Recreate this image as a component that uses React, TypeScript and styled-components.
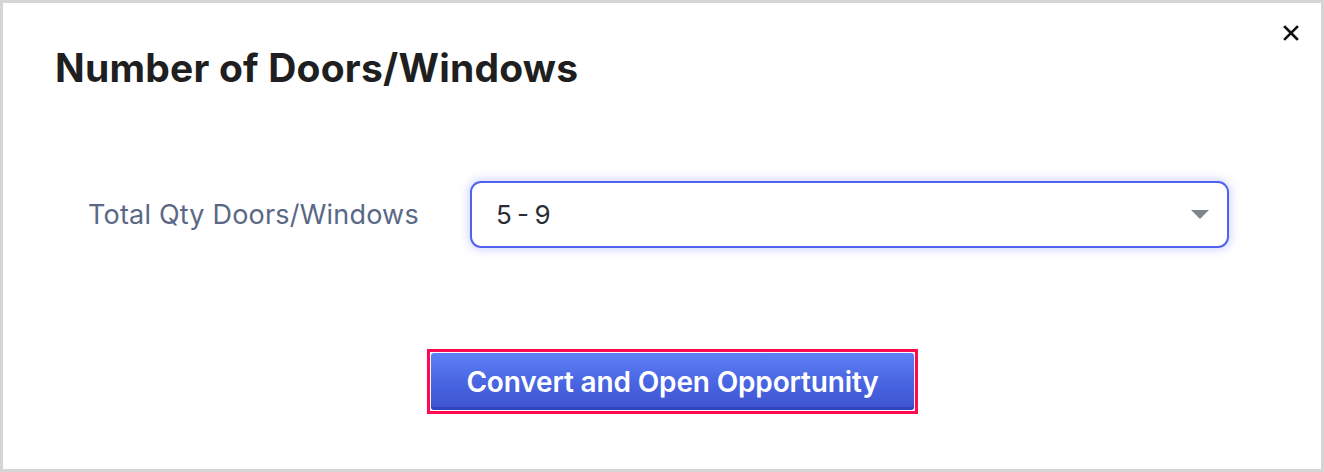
import styled, { createGlobalStyle } from 'styled-components';

const GlobalStyle = createGlobalStyle`
  html, body {
    margin: 0;
    padding: 0;
    background: #ffffff;
  }
  * {
    box-sizing: border-box;
  }
`;

export default function App() {
  return (
    <>
      <GlobalStyle />
      <Frame>
        <CloseButton aria-label="Close">
          <svg width="16" height="16" viewBox="0 0 16 16">
            <path d="M2 2 L14 14 M14 2 L2 14" stroke="#111" strokeWidth="2.6" strokeLinecap="square" />
          </svg>
        </CloseButton>
        <Title>Number of Doors/Windows</Title>
        <FieldRow>
          <Label>Total Qty Doors/Windows</Label>
          <Select>
            <SelectValue>5 - 9</SelectValue>
            <Caret />
          </Select>
        </FieldRow>
        <Footer>
          <Highlight>
            <PrimaryButton>Convert and Open Opportunity</PrimaryButton>
          </Highlight>
        </Footer>
      </Frame>
    </>
  );
}

const Frame = styled.div`
  position: relative;
  width: 1324px;
  height: 472px;
  border: 3px solid #d5d5d5;
  background: #ffffff;
  padding: 41px 0 0 52px;
  font-family: Inter, 'Noto Sans', sans-serif;
  display: flex;
  flex-direction: column;
`;

const CloseButton = styled.button`
  position: absolute;
  top: 22px;
  right: 22px;
  width: 16px;
  height: 16px;
  padding: 0;
  border: none;
  background: none;
  display: flex;
  cursor: pointer;
`;

const Title = styled.h1`
  margin: 0;
  font-size: 39px;
  font-weight: 700;
  line-height: 48px;
  color: #1f1f21;
  letter-spacing: 0.2px;
`;

const FieldRow = styled.div`
  display: flex;
  align-items: center;
  margin-top: 89px;
  padding-left: 33px;
`;

const Label = styled.label`
  width: 382px;
  font-size: 27px;
  letter-spacing: 0.2px;
  color: #5a6886;
`;

const Select = styled.div`
  width: 759px;
  height: 67px;
  border: 2px solid #5262f0;
  border-radius: 11px;
  box-shadow: 0 0 8px 2px rgba(98, 110, 255, 0.28);
  display: flex;
  align-items: center;
  justify-content: space-between;
  padding: 0 18px 0 24px;
`;

const SelectValue = styled.span`
  font-size: 26px;
  color: #2a2d36;
  word-spacing: -2px;
`;

const Caret = styled.span`
  width: 0;
  height: 0;
  border-left: 9px solid transparent;
  border-right: 9px solid transparent;
  border-top: 9px solid #80848f;
`;

const Footer = styled.div`
  display: flex;
  justify-content: center;
  margin-top: 101px;
  padding-right: 52px;
`;

const Highlight = styled.div`
  border: 3px solid #ff0a50;
  padding: 1px;
  margin-left: 21px;
`;

const PrimaryButton = styled.button`
  width: 483px;
  height: 57px;
  border: none;
  border-radius: 3px;
  background: linear-gradient(180deg, #5d80f6 0%, #4a66e2 50%, #3d52cf 100%);
  box-shadow: inset 0 -3px 0 rgba(40, 50, 170, 0.45);
  color: #ffffff;
  font-family: Inter, 'Noto Sans', sans-serif;
  font-size: 28px;
  font-weight: 600;
  letter-spacing: -0.15px;
  cursor: pointer;
`;
